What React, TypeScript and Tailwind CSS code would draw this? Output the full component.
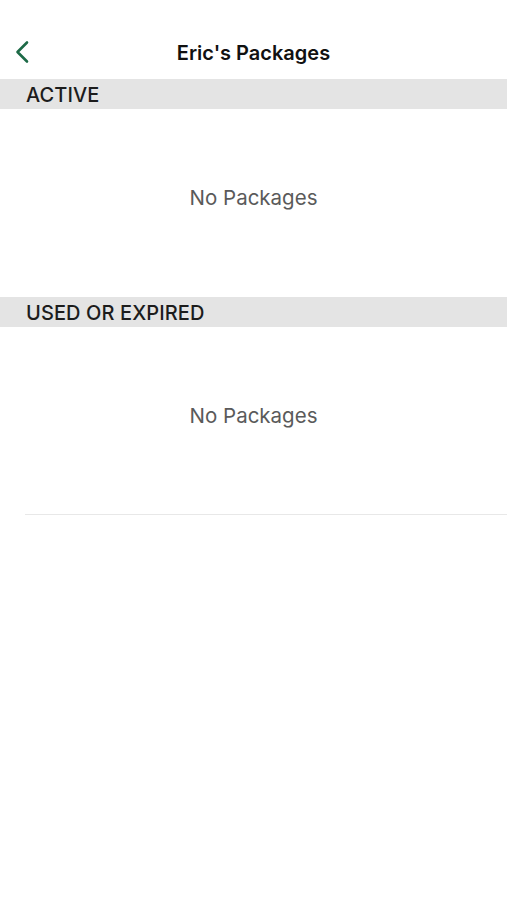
import React from 'react';

const font = { fontFamily: 'Inter, "Noto Sans", sans-serif' };

const SectionHeader: React.FC<{ label: string }> = ({ label }) => (
  <div className="h-[30px] bg-[#e4e4e4] flex items-center pl-[26px] pt-px text-[20px] font-medium text-[#1c1c1c] leading-none tracking-[0.1px]">
    {label}
  </div>
);

const EmptyBody: React.FC<{ divider?: boolean }> = ({ divider }) => (
  <div className="h-[188px] flex flex-col">
    <div className="flex-1 pt-[77px] text-center text-[20.5px] text-[#5a5a5a] leading-[24px]">
      No Packages
    </div>
    {divider && <div className="ml-[25px] h-px bg-[#e8e8e8]" />}
  </div>
);

export default function App() {
  return (
    <div className="w-[507px] h-[900px] bg-white" style={font}>
      {/* nav bar */}
      <div className="h-[79px] relative flex items-center justify-center pt-[26px]">
        <svg className="absolute left-[14px] top-[40px]" width="18" height="24" viewBox="0 0 18 24">
          <path d="M13 2.5 L3.5 12 L13 21.5" fill="none" stroke="#1d6a47" strokeWidth="2.6" strokeLinecap="round" strokeLinejoin="round" />
        </svg>
        <span className="text-[20px] font-semibold text-[#111]">Eric's Packages</span>
      </div>
      <SectionHeader label="ACTIVE" />
      <EmptyBody />
      <SectionHeader label="USED OR EXPIRED" />
      <EmptyBody divider />
    </div>
  );
}
